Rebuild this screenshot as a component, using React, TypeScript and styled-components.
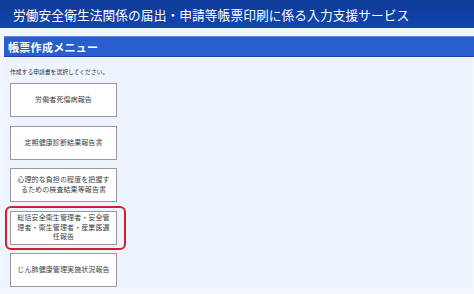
import styled, { createGlobalStyle } from 'styled-components';

const GlobalStyle = createGlobalStyle`
  html, body {
    margin: 0;
    padding: 0;
    background: #eef4fe;
    overflow: hidden;
  }
  body {
    font-family: "Noto Sans CJK JP", "Noto Sans", sans-serif;
  }
`;

const Page = styled.div`
  width: 474px;
  height: 294px;
  display: flex;
  flex-direction: column;
  background: #eef4fe;
`;

const Header = styled.header`
  height: 28px;
  display: flex;
  align-items: center;
  padding-left: 13px;
  background: linear-gradient(to bottom, #0c3a98, #1246ad);
  color: #fff;
  font-size: 12.7px;
  letter-spacing: 0.1px;
  white-space: nowrap;
`;

const Main = styled.main`
  flex: 1;
  padding: 8px 0 0 4px;
  background: #f0f5ff;
`;

const SectionBar = styled.h2`
  margin: 0;
  height: 19px;
  display: flex;
  align-items: center;
  padding-left: 4px;
  background: #2a5ecf;
  border-top: 1px solid #5a86e0;
  border-bottom: 1px solid #1a45a8;
  color: #fff;
  font-size: 11px;
  font-weight: bold;
  letter-spacing: 0.3px;
`;

const Content = styled.div`
  padding: 10px 0 0 6px;
  margin-right: 2px;
  background: #eef4fe;
`;

const Caption = styled.p`
  margin: 0 0 6px;
  font-size: 5.8px;
  line-height: 10px;
  color: #333;
`;

const ButtonList = styled.div`
  display: flex;
  flex-direction: column;
  gap: 8.5px;
`;

const FormButton = styled.div<{ $selected?: boolean }>`
  position: relative;
  box-sizing: border-box;
  width: 107px;
  height: 34px;
  display: flex;
  align-items: center;
  justify-content: center;
  text-align: center;
  padding: 0 6px;
  background: #fff;
  border: 1px solid #9a9a9a;
  color: #444;
  font-size: 7px;
  line-height: 9.6px;
  letter-spacing: 0.1px;

  ${({ $selected }) =>
    $selected &&
    `
    &::after {
      content: '';
      position: absolute;
      top: -6px;
      left: -6px;
      right: -10px;
      bottom: -6px;
      border: 2px solid #d21f2f;
      border-radius: 6px;
    }
  `}
`;

const forms = [
  { label: '労働者死傷病報告' },
  { label: '定期健康診断結果報告書' },
  { label: '心理的な負担の程度を把握するための検査結果等報告書' },
  { label: '総括安全衛生管理者・安全管理者・衛生管理者・産業医選任報告', selected: true },
  { label: 'じん肺健康管理実施状況報告' },
];

export default function App() {
  return (
    <Page>
      <GlobalStyle />
      <Header>労働安全衛生法関係の届出・申請等帳票印刷に係る入力支援サービス</Header>
      <Main>
        <SectionBar>帳票作成メニュー</SectionBar>
        <Content>
          <Caption>作成する申請書を選択してください。</Caption>
          <ButtonList>
            {forms.map((f) => (
              <FormButton key={f.label} $selected={f.selected}>
                {f.label}
              </FormButton>
            ))}
          </ButtonList>
        </Content>
      </Main>
    </Page>
  );
}
